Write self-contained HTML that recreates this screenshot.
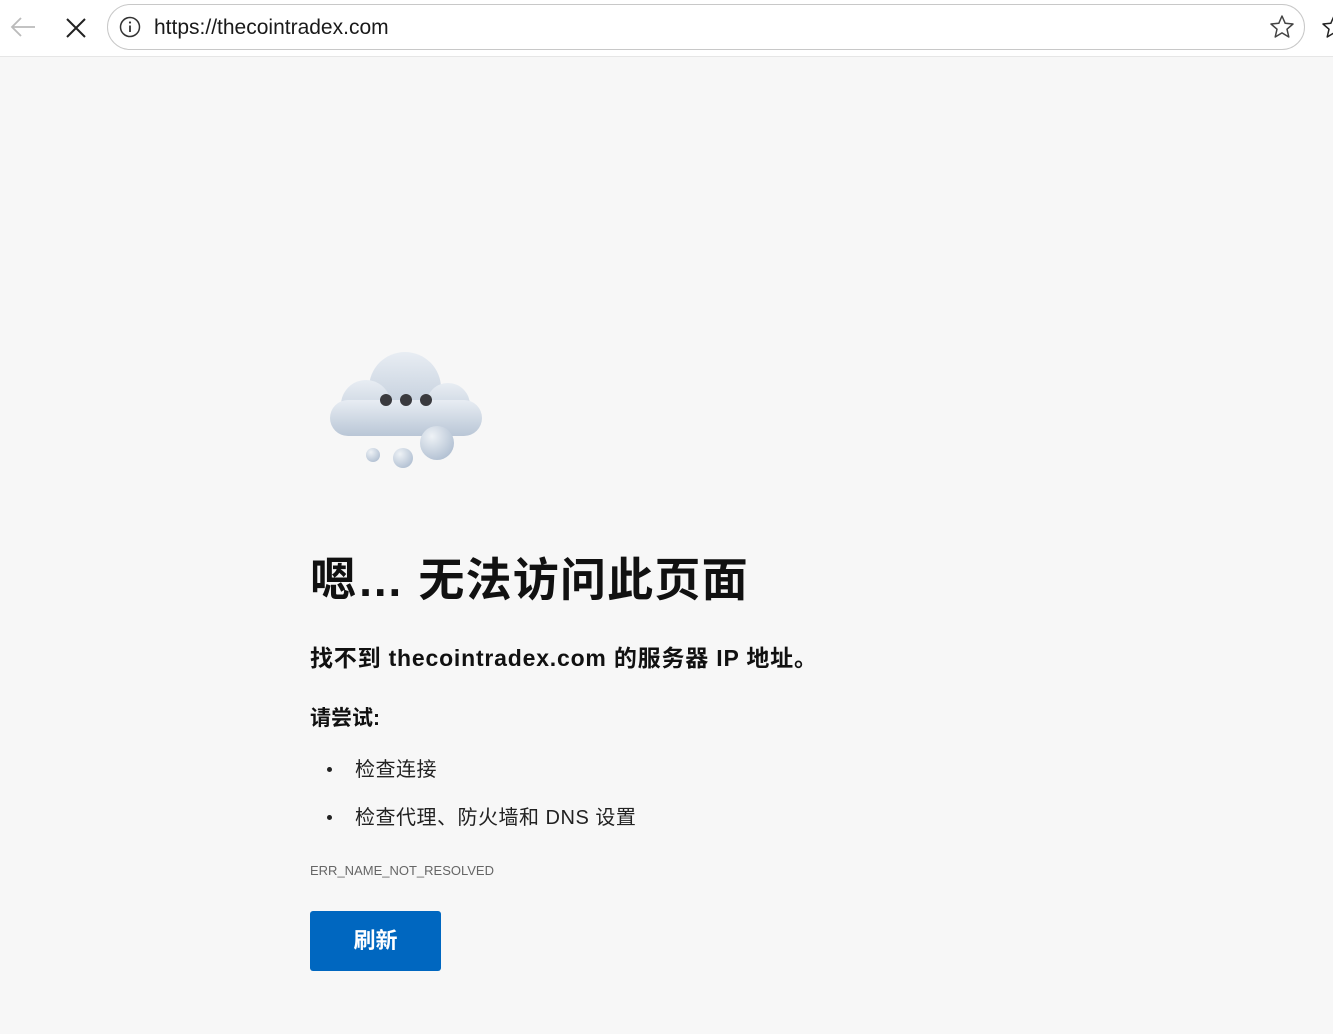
<!DOCTYPE html>
<html><head><meta charset="utf-8"><style>
html,body{margin:0;padding:0;width:1333px;height:1034px;overflow:hidden;background:#f7f7f7;font-family:"Liberation Sans","Noto Sans CJK SC",sans-serif;}
.top{position:absolute;left:0;top:0;width:1333px;height:56px;background:#fff;border-bottom:1px solid #e6e6e6;}
.addr{position:absolute;left:107px;top:4px;width:1196px;height:44px;border:1px solid #c8c8c8;border-radius:23px;background:#fff;}
.url{position:absolute;left:154px;top:16px;font-size:21px;color:#1a1a1a;}
.abs{position:absolute;}
h1{position:absolute;left:310px;top:544px;margin:0;font-size:46px;font-weight:bold;color:#111;letter-spacing:1.2px;}
.sub{position:absolute;left:310px;top:639px;font-size:23px;font-weight:bold;color:#111;letter-spacing:0.8px;}
.try{position:absolute;left:310px;top:702px;font-size:21px;font-weight:bold;color:#111;}
.li{position:absolute;left:355px;font-size:20px;color:#222;}
.dot{position:absolute;left:327px;width:5px;height:5px;border-radius:50%;background:#222;}
.err{position:absolute;left:310px;top:863px;font-size:13px;color:#666;}
.btn{position:absolute;left:310px;top:911px;width:131px;height:60px;background:#0067c0;border-radius:3px;color:#fff;font-size:22px;font-weight:bold;text-align:center;line-height:60px;}
</style></head><body>
<div class="top">
 <svg class="abs" style="left:8px;top:14px" width="30" height="26" viewBox="0 0 30 26"><path d="M27 13H4M13 4L4 13L13 22" stroke="#bbb" stroke-width="1.8" fill="none"/></svg>
 <svg class="abs" style="left:64px;top:16px" width="24" height="24" viewBox="0 0 24 24"><path d="M3 3L21 21M21 3L3 21" stroke="#222" stroke-width="2" fill="none"/></svg>
 <div class="addr"></div>
 <svg class="abs" style="left:119px;top:16px" width="22" height="22" viewBox="0 0 22 22"><circle cx="11" cy="11" r="9.5" stroke="#333" stroke-width="1.5" fill="none"/><path d="M11 9.5V16" stroke="#333" stroke-width="1.8"/><circle cx="11" cy="6.5" r="1.1" fill="#333"/></svg>
 <div class="url">https://thecointradex.com</div>
 <svg class="abs" style="left:1269px;top:14px" width="26" height="26" viewBox="0 0 26 26"><path d="M13 2L16.2 9.3L24 10L18 15.2L19.8 23L13 18.9L6.2 23L8 15.2L2 10L9.8 9.3Z" stroke="#444" stroke-width="1.5" fill="none" stroke-linejoin="round"/></svg>
 <svg class="abs" style="left:1321px;top:14px" width="26" height="26" viewBox="0 0 26 26"><path d="M13 2L16.2 9.3L24 10L18 15.2L19.8 23L13 18.9L6.2 23L8 15.2L2 10L9.8 9.3Z" stroke="#222" stroke-width="1.5" fill="none" stroke-linejoin="round"/></svg>
</div>
<svg class="abs" style="left:320px;top:340px" width="180" height="140" viewBox="320 340 180 140">
 <defs><linearGradient id="g" x1="0" y1="0" x2="0" y2="1"><stop offset="0" stop-color="#e8edf3"/><stop offset="1" stop-color="#b9c6d6"/></linearGradient>
 <radialGradient id="b" cx="0.35" cy="0.3" r="0.8"><stop offset="0" stop-color="#eef2f6"/><stop offset="1" stop-color="#aebdd0"/></radialGradient></defs>
 <g fill="url(#g)">
  <circle cx="405" cy="388" r="36"/>
  <circle cx="366" cy="405" r="25"/>
  <circle cx="448" cy="405" r="22"/>
  <rect x="330" y="400" width="152" height="36" rx="18"/>
 </g>
 <circle cx="437" cy="443" r="17" fill="url(#b)"/>
 <circle cx="403" cy="458" r="10" fill="url(#b)"/>
 <circle cx="373" cy="455" r="7" fill="url(#b)"/>
 <circle cx="386" cy="400" r="6" fill="#3a3a3e"/>
 <circle cx="406" cy="400" r="6" fill="#3a3a3e"/>
 <circle cx="426" cy="400" r="6" fill="#3a3a3e"/>
</svg>
<h1>嗯… 无法访问此页面</h1>
<div class="sub">找不到 thecointradex.com 的服务器 IP 地址。</div>
<div class="try">请尝试:</div>
<div class="dot" style="top:767px"></div><div class="li" style="top:753px;letter-spacing:0.5px">检查连接</div>
<div class="dot" style="top:815px"></div><div class="li" style="top:801px;letter-spacing:0.5px">检查代理、防火墙和 DNS 设置</div>
<div class="err">ERR_NAME_NOT_RESOLVED</div>
<div class="btn">刷新</div>
</body></html>
